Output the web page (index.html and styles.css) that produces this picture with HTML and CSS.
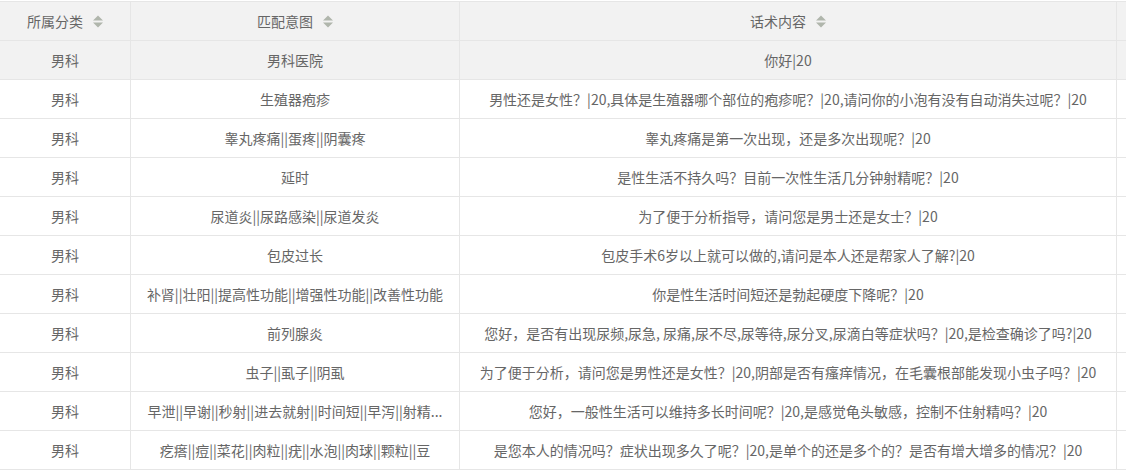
FILE: index.html
```html
<!DOCTYPE html>
<html lang="zh-CN">
<head>
<meta charset="utf-8">
<title>话术列表</title>
<link rel="stylesheet" href="styles.css">
</head>
<body>
<div class="table">
  <div class="row head">
    <div class="cell"><span class="th">所属分类<svg class="sort" width="10" height="13" viewBox="0 0 10 13"><path d="M0 5.5 L5 0.5 L10 5.5 Z M0 7.5 L10 7.5 L5 12.5 Z"/></svg></span></div>
    <div class="cell"><span class="th">匹配意图<svg class="sort" width="10" height="13" viewBox="0 0 10 13"><path d="M0 5.5 L5 0.5 L10 5.5 Z M0 7.5 L10 7.5 L5 12.5 Z"/></svg></span></div>
    <div class="cell"><span class="th">话术内容<svg class="sort" width="10" height="13" viewBox="0 0 10 13"><path d="M0 5.5 L5 0.5 L10 5.5 Z M0 7.5 L10 7.5 L5 12.5 Z"/></svg></span></div>
    <div class="cell"></div>
  </div>
  <div class="row active">
    <div class="cell">男科</div>
    <div class="cell">男科医院</div>
    <div class="cell">你好|20</div>
    <div class="cell"></div>
  </div>
  <div class="row">
    <div class="cell">男科</div>
    <div class="cell">生殖器疱疹</div>
    <div class="cell">男性还是女性？|20,具体是生殖器哪个部位的疱疹呢？|20,请问你的小泡有没有自动消失过呢？|20</div>
    <div class="cell"></div>
  </div>
  <div class="row">
    <div class="cell">男科</div>
    <div class="cell">睾丸疼痛||蛋疼||阴囊疼</div>
    <div class="cell">睾丸疼痛是第一次出现，还是多次出现呢？|20</div>
    <div class="cell"></div>
  </div>
  <div class="row">
    <div class="cell">男科</div>
    <div class="cell">延时</div>
    <div class="cell">是性生活不持久吗？目前一次性生活几分钟射精呢？|20</div>
    <div class="cell"></div>
  </div>
  <div class="row">
    <div class="cell">男科</div>
    <div class="cell">尿道炎||尿路感染||尿道发炎</div>
    <div class="cell">为了便于分析指导，请问您是男士还是女士？|20</div>
    <div class="cell"></div>
  </div>
  <div class="row">
    <div class="cell">男科</div>
    <div class="cell">包皮过长</div>
    <div class="cell">包皮手术6岁以上就可以做的,请问是本人还是帮家人了解?|20</div>
    <div class="cell"></div>
  </div>
  <div class="row">
    <div class="cell">男科</div>
    <div class="cell">补肾||壮阳||提高性功能||增强性功能||改善性功能</div>
    <div class="cell">你是性生活时间短还是勃起硬度下降呢？|20</div>
    <div class="cell"></div>
  </div>
  <div class="row">
    <div class="cell">男科</div>
    <div class="cell">前列腺炎</div>
    <div class="cell">您好，是否有出现尿频,尿急, 尿痛,尿不尽,尿等待,尿分叉,尿滴白等症状吗？|20,是检查确诊了吗?|20</div>
    <div class="cell"></div>
  </div>
  <div class="row">
    <div class="cell">男科</div>
    <div class="cell">虫子||虱子||阴虱</div>
    <div class="cell">为了便于分析，请问您是男性还是女性？|20,阴部是否有瘙痒情况，在毛囊根部能发现小虫子吗？|20</div>
    <div class="cell"></div>
  </div>
  <div class="row">
    <div class="cell">男科</div>
    <div class="cell">早泄||早谢||秒射||进去就射||时间短||早泻||射精...</div>
    <div class="cell">您好，一般性生活可以维持多长时间呢？|20,是感觉龟头敏感，控制不住射精吗？|20</div>
    <div class="cell"></div>
  </div>
  <div class="row">
    <div class="cell">男科</div>
    <div class="cell">疙瘩||痘||菜花||肉粒||疣||水泡||肉球||颗粒||豆</div>
    <div class="cell">是您本人的情况吗？症状出现多久了呢？|20,是单个的还是多个的？是否有增大增多的情况？|20</div>
    <div class="cell"></div>
  </div>
</div>
</body>
</html>
```
FILE: styles.css
```css
html, body {
  margin: 0;
  padding: 0;
  background: #fff;
}
body {
  font-family: "Noto Sans CJK SC", "Noto Sans", "Liberation Sans", sans-serif;
  font-size: 14px;
  color: #666;
  overflow: hidden;
}
.table {
  margin-top: 1px;
  border-top: 1px solid #e6e6e6;
  width: 1126px;
  overflow: hidden;
}
.row {
  display: grid;
  grid-template-columns: 131px 329px 657px 120px;
  width: 1237px;
}
.cell {
  box-sizing: border-box;
  height: 39px;
  border-right: 1px solid #e6e6e6;
  border-bottom: 1px solid #e6e6e6;
  padding: 0 10px;
  line-height: 38px;
  text-align: center;
  white-space: nowrap;
}
.head .cell,
.active .cell {
  background: #f2f2f2;
}
.th {
  display: inline-flex;
  align-items: center;
}
.sort {
  margin-left: 10px;
  fill: #b0b6ac;
}
```
